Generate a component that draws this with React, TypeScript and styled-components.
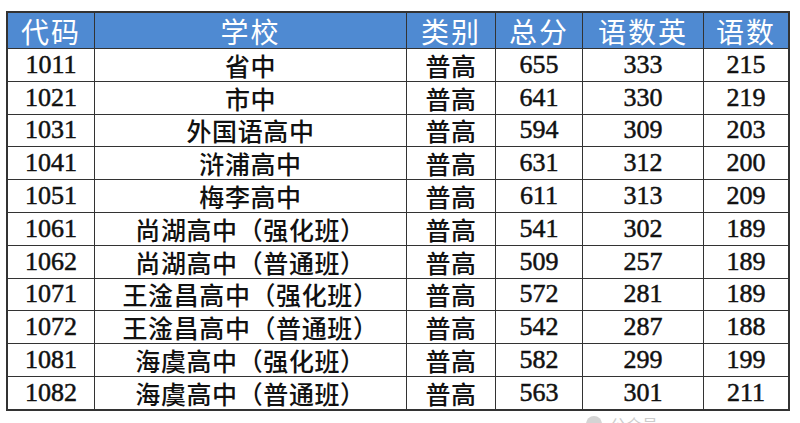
import React from 'react'
import styled, { createGlobalStyle } from 'styled-components'

const GlobalStyle = createGlobalStyle`
  html, body { margin: 0; padding: 0; background: #fff; }
  body { font-family: "Liberation Serif", "Noto Sans CJK SC", serif; }
`

const Page = styled.div`
  width: 800px;
  height: 423px;
  overflow: hidden;
  padding: 11px 0 0 6px;
  box-sizing: border-box;
  position: relative;
`

const Table = styled.table`
  border-collapse: collapse;
  table-layout: fixed;
  width: 775px;
  border: 2px solid #333;
`

const HeadCell = styled.th<{ $w: number }>`
  width: ${p => p.$w}px;
  height: 35px;
  padding: 0;
  background: #4f8ad2;
  color: #fff;
  font-family: "Noto Sans CJK SC", sans-serif;
  font-weight: 400;
  font-size: 28px;
  line-height: 28px;
  text-align: center;
  border: 1px solid #333;
  letter-spacing: 2px;
`

const Cell = styled.td<{ $cjk?: boolean }>`
  height: 31.8px;
  padding: 0;
  text-align: center;
  border: 1px solid #333;
  color: #111;
  font-family: ${p => (p.$cjk ? '"Noto Sans CJK SC", sans-serif' : '"Liberation Serif", serif')};
  font-size: ${p => (p.$cjk ? '25px' : '26px')};
  font-weight: ${p => (p.$cjk ? 500 : 400)};
  -webkit-text-stroke: ${p => (p.$cjk ? '0' : '0.5px #111')};
  line-height: 26px;
  letter-spacing: ${p => (p.$cjk ? '0.6px' : '0')};
`

const Watermark = styled.div`
  position: absolute;
  left: 586px;
  top: 412px;
  display: flex;
  align-items: center;
  gap: 8px;
  color: #ccc;
  font-family: "Noto Sans CJK SC", sans-serif;
  font-size: 16px;
`

const Dot = styled.span`
  width: 16px;
  height: 16px;
  border-radius: 50%;
  background: #d4d4d4;
`

const cols = [
  { name: '代码', w: 86 },
  { name: '学校', w: 311 },
  { name: '类别', w: 88 },
  { name: '总分', w: 86 },
  { name: '语数英', w: 120 },
  { name: '语数', w: 84 },
]

const rows: [string, string, string, string, string, string][] = [
  ['1011', '省中', '普高', '655', '333', '215'],
  ['1021', '市中', '普高', '641', '330', '219'],
  ['1031', '外国语高中', '普高', '594', '309', '203'],
  ['1041', '浒浦高中', '普高', '631', '312', '200'],
  ['1051', '梅李高中', '普高', '611', '313', '209'],
  ['1061', '尚湖高中（强化班）', '普高', '541', '302', '189'],
  ['1062', '尚湖高中（普通班）', '普高', '509', '257', '189'],
  ['1071', '王淦昌高中（强化班）', '普高', '572', '281', '189'],
  ['1072', '王淦昌高中（普通班）', '普高', '542', '287', '188'],
  ['1081', '海虞高中（强化班）', '普高', '582', '299', '199'],
  ['1082', '海虞高中（普通班）', '普高', '563', '301', '211'],
]

export default function App() {
  return (
    <Page>
      <GlobalStyle />
      <Table>
        <thead>
          <tr>
            {cols.map(c => (
              <HeadCell key={c.name} $w={c.w}>{c.name}</HeadCell>
            ))}
          </tr>
        </thead>
        <tbody>
          {rows.map(r => (
            <tr key={r[0]}>
              <Cell>{r[0]}</Cell>
              <Cell $cjk>{r[1]}</Cell>
              <Cell $cjk>{r[2]}</Cell>
              <Cell>{r[3]}</Cell>
              <Cell>{r[4]}</Cell>
              <Cell>{r[5]}</Cell>
            </tr>
          ))}
        </tbody>
      </Table>
      <Watermark>
        <Dot />
        <span>公众号</span>
      </Watermark>
    </Page>
  )
}
